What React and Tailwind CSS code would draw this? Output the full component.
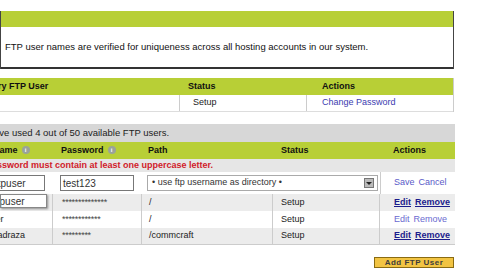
const GREEN = 'bg-[#b8cf36]';

function Info() {
  return (
    <span className="inline-flex w-[8px] h-[8px] rounded-full bg-[#9aa39a] text-white text-[6px] font-bold items-center justify-center ml-[4px] align-middle leading-none">
      i
    </span>
  );
}

const users = [
  { name: 'ftpuser', shift: '-ml-[7px]', pass: '**************', path: '/', bg: 'bg-[#ececec]', strong: true },
  { name: 'user', shift: '-ml-[14px]', pass: '************', path: '/', bg: 'bg-white', strong: false },
  { name: 'ahmadraza', shift: '-ml-[20px]', pass: '*********', path: '/commcraft', bg: 'bg-[#ececec]', strong: true },
];

export default function App() {
  return (
    <div
      className="w-[480px] h-[270px] overflow-hidden bg-white relative text-[9px] text-[#222]"
      style={{ fontFamily: '"Liberation Sans", Arial, sans-serif' }}
    >
      <div className="h-[11px]" />

      {/* Top info box */}
      <div className="w-[454px] border-r border-l border-[#444]">
        <div className={`h-[16px] ${GREEN}`} />
        <div className="h-[42px] border-b-2 border-[#333] flex items-center pl-[4px] text-[9.5px] text-[#111]">
          FTP user names are verified for uniqueness across all hosting accounts in our system.
        </div>
      </div>

      <div className="h-[9px]" />

      {/* Primary FTP user table */}
      <div className="w-[454px] border-r border-[#ccc]">
        <div className={`h-[17px] ${GREEN} grid grid-cols-[180px_127px_1fr] items-center font-bold text-[#111]`}>
          <div className="-ml-[27px] whitespace-nowrap">Primary FTP User</div>
          <div className="pl-[8px]">Status</div>
          <div className="pl-[15px]">Actions</div>
        </div>
        <div className="h-[17px] grid grid-cols-[180px_127px_1fr] items-center border-b border-[#ddd]">
          <div className="h-full border-r border-[#ccc]" />
          <div className="h-full pl-[13px] border-r border-[#ccc] flex items-center">Setup</div>
          <div className="pl-[15px] text-[#3b3bb0]">Change Password</div>
        </div>
      </div>

      <div className="h-[12px]" />

      {/* Additional FTP users */}
      <div className="w-[455px]">
        <div className="h-[18px] bg-[#d7d7d7] flex items-center text-[9.5px]">
          <span className="-ml-[30px] whitespace-nowrap">You have used 4 out of 50 available FTP users.</span>
        </div>
        <div className={`h-[17px] ${GREEN} grid grid-cols-[53px_89px_130px_108px_1fr] items-center font-bold text-[#111]`}>
          <div className="-ml-[26px] whitespace-nowrap">Username<Info /></div>
          <div className="pl-[8px] whitespace-nowrap">Password<Info /></div>
          <div className="pl-[6px]">Path</div>
          <div className="pl-[9px]">Status</div>
          <div className="pl-[13px]">Actions</div>
        </div>
        <div className="h-[13px] bg-[#e6e6e6] flex items-center text-[#d1202a] font-bold text-[9px]">
          <span className="-ml-[14px] whitespace-nowrap">Password must contain at least one uppercase letter.</span>
        </div>

        {/* Edit row */}
        <div className="h-[22px] grid grid-cols-[53px_89px_130px_108px_1fr] items-center bg-white">
          <div className="h-full flex items-center">
            <div className="w-[46px] h-[16px] -ml-[1px] border border-[#777] border-l-0 flex items-center pl-[3px] text-[10px] text-[#333] overflow-hidden">
              <span className="-ml-[7px]">ftpuser</span>
            </div>
          </div>
          <div className="h-full flex items-center pl-[7px]">
            <div className="w-[74px] h-[16px] border border-[#777] flex items-center pl-[2px] text-[10px] text-[#333]">
              test123
            </div>
          </div>
          <div className="h-full col-span-2 flex items-center pl-[5px]">
            <div className="w-[231px] h-[16px] border border-[#aaa] flex items-center pl-[4px] text-[#333] justify-between pr-[3px]">
              <span>• use ftp username as directory •</span>
              <span className="w-[10px] h-[10px] bg-[#bbb] border border-[#777] flex items-center justify-center">
                <span className="w-0 h-0 border-l-[3px] border-r-[3px] border-t-[3px] border-l-transparent border-r-transparent border-t-[#222]" />
              </span>
            </div>
          </div>
          <div className="h-full border-l border-[#ccc] flex items-center pl-[13px] text-[#5a5ac8] gap-[4px]">
            <span>Save</span>
            <span>Cancel</span>
          </div>
        </div>

        {users.map((u, i) => (
          <div
            key={i}
            className={`h-[17px] grid grid-cols-[53px_89px_130px_108px_1fr] items-center ${u.bg} ${i === 2 ? 'border-b border-[#ccc]' : ''}`}
          >
            <div className="h-full border-r border-[#ccc] flex items-center overflow-hidden">
              <span className={`${u.shift} whitespace-nowrap`}>{u.name}</span>
            </div>
            <div className="h-full border-r border-[#ccc] flex items-center pl-[9px] text-[9px] tracking-[-0.3px] text-[#444]">
              {u.pass}
            </div>
            <div className="h-full flex items-center pl-[7px]">{u.path}</div>
            <div className="h-full border-l border-r border-[#ccc] flex items-center pl-[8px]">Setup</div>
            <div
              className={`h-full flex items-center pl-[14px] gap-[4px] ${
                u.strong ? 'text-[#1c1c8c] font-bold underline' : 'text-[#6a6ad0]'
              }`}
            >
              <span>Edit</span>
              <span>Remove</span>
            </div>
          </div>
        ))}
      </div>

      {/* Autocomplete popup */}
      <div className="absolute left-0 top-[194px] w-[47px] h-[14px] bg-white border border-[#888] shadow-[1px_1px_2px_rgba(0,0,0,0.4)] flex items-center text-[10px] text-[#333] overflow-hidden">
        <span className="-ml-[7px]">ftpuser</span>
      </div>

      {/* Add button */}
      <div className="flex justify-end w-[454px] mt-[12px]">
        <button className="w-[80px] h-[11px] bg-[#f2c443] border border-[#8a6b12] text-[#3d3d3d] font-bold text-[8px] leading-none tracking-[0.5px] flex items-center justify-center">
          Add FTP User
        </button>
      </div>
    </div>
  );
}
